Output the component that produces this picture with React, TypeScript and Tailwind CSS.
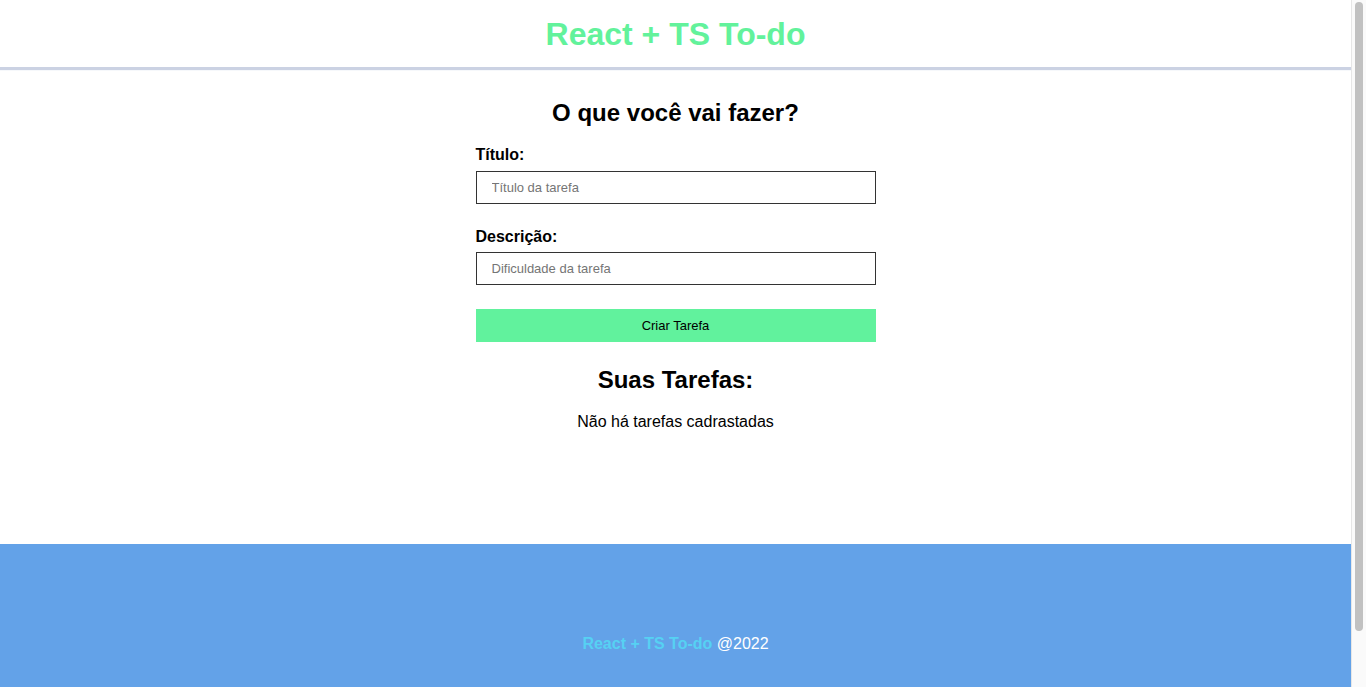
import React from "react";

export default function App() {
  return (
    <div className="h-screen flex overflow-hidden" style={{ fontFamily: '"Liberation Sans", Arial, sans-serif' }}>
      <div className="flex-1 min-w-0 overflow-hidden">
        <div className="min-h-[745px] flex flex-col bg-white text-black">
          <header className="h-[67px] flex items-center justify-center bg-white shadow-[0_3px_1px_#cbd2e3] relative z-10">
            <h1 className="text-[32px] font-bold text-[#62f29b] leading-none">React + TS To-do</h1>
          </header>
          <main className="h-[477px] flex flex-col items-center">
            <div className="w-[400px] flex flex-col">
              <h2 className="mt-[32px] text-center text-[24px] font-bold leading-[28px]">O que você vai fazer?</h2>
              <form className="flex flex-col mt-[19px]" onSubmit={(e) => e.preventDefault()}>
                <label className="text-[16px] font-bold leading-[18px]">Título:</label>
                <input
                  type="text"
                  placeholder="Título da tarefa"
                  className="mt-[7px] h-[33px] border border-[#333] px-[15px] text-[13px] placeholder:text-[#757575] outline-none"
                />
                <label className="mt-[24px] text-[16px] font-bold leading-[18px]">Descrição:</label>
                <input
                  type="text"
                  placeholder="Dificuldade da tarefa"
                  className="mt-[6px] h-[33px] border border-[#333] px-[15px] text-[13px] placeholder:text-[#757575] outline-none"
                />
                <button type="submit" className="mt-[24px] h-[33px] bg-[#61f29d] text-[13px] text-black">
                  Criar Tarefa
                </button>
              </form>
              <h2 className="mt-[24px] text-center text-[24px] font-bold leading-[28px]">Suas Tarefas:</h2>
              <p className="mt-[19px] text-center text-[16px] leading-[18px]">Não há tarefas cadrastadas</p>
            </div>
          </main>
          <footer className="h-[200px] bg-[#63a2e8] flex items-center justify-center">
            <p className="text-[16px] text-white">
              <span className="font-bold text-[#56d1f3]">React + TS To-do</span> @2022
            </p>
          </footer>
        </div>
      </div>
      <div className="w-[15px] shrink-0 bg-[#fafafa] border-l border-[#e6e6e6] flex justify-center">
        <div className="mt-[2px] w-[8px] h-[629px] rounded-full bg-[#c1c1c1]" />
      </div>
    </div>
  );
}
